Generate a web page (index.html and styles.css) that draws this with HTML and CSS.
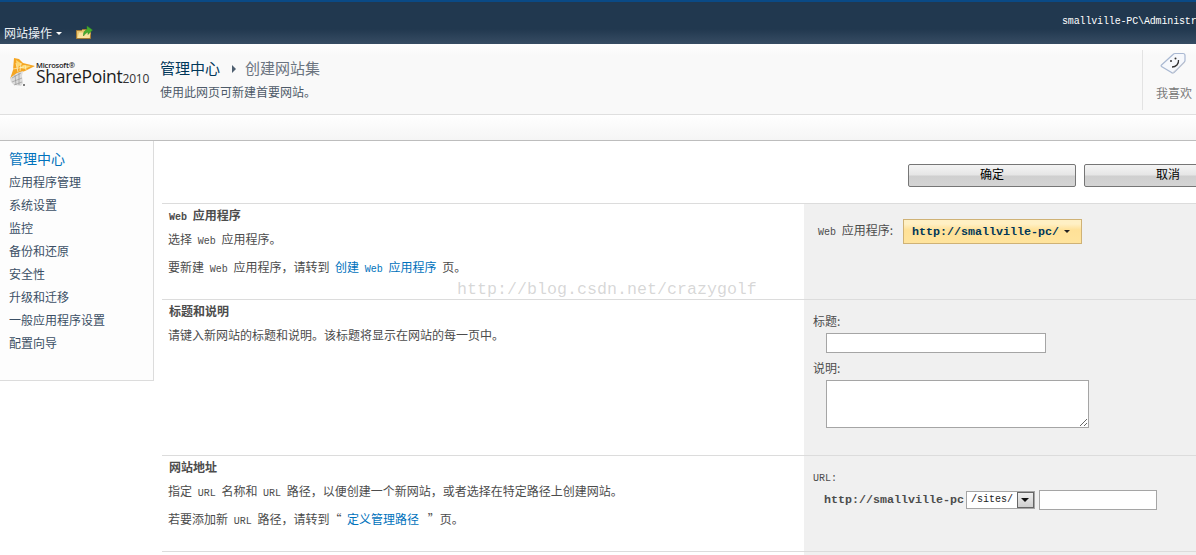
FILE: index.html
```html
<!DOCTYPE html>
<html lang="zh">
<head>
<meta charset="utf-8">
<title>创建网站集</title>
<link rel="stylesheet" href="styles.css">
</head>
<body>
<div class="page">
  <header class="topbar">
    <div class="site-actions">
      <span class="actions-label">网站操作</span>
      <span class="caret caret-white"></span>
      <svg class="folder" width="17" height="15" viewBox="0 0 17 15">
        <path d="M.5 5.500h5l1-1h8v9H.5z" fill="#e9c46e" stroke="#a67c34"/>
        <path d="M1.500 13l1.500-5.500h11.500L13.500 13z" fill="#f8e3a0"/>
        <path d="M7.500 11c-.5-3.500 1-5.500 3.500-6.500V1L16.500 5 12 9.500V7c-1.500.5-3 2-4.500 4z" fill="#46ad30" stroke="#2e8420" stroke-width=".5"/>
      </svg>
    </div>
    <div class="user">smallville-PC\Administrator</div>
  </header>

  <section class="titlearea">
    <div class="logo">
      <svg class="logo-mark" width="27" height="30" viewBox="0 0 27 30">
        <path d="M5 1l5 1 4 4 12 3-10 5-9 3-6 5 3-9z" fill="#f5a623"/>
        <path d="M7 3l6 4-5 4zM14 8l8 1-6 3-5-1z" fill="#fcd975"/>
        <path d="M7 6l2 9M12 6l-1 8M4 12l11-2M16 8l1 5" stroke="#fff3c8" stroke-width=".7" fill="none"/>
        <path d="M1 21l7-5 6-2-1 5 1 7-2 3-7-1-3-3z" fill="#dcdcdc"/>
        <path d="M3 21l9-5M3 25l10-4M5 28l8-3M6 18l1 10M10 16l0 12" stroke="#8f8f8f" stroke-width=".6" fill="none"/>
        <circle cx="15" cy="28" r="1" fill="#555"/>
      </svg>
      <div class="logo-text">
        <span class="logo-ms">Microsoft®</span>
        <span class="logo-name">SharePoint<small class="logo-year">2010</small></span>
      </div>
    </div>
    <div class="title-text">
      <div class="crumbs">
        <a class="crumb-root">管理中心</a>
        <span class="crumb-arrow"></span>
        <span class="crumb-cur">创建网站集</span>
      </div>
      <div class="subtitle">使用此网页可新建首要网站。</div>
    </div>
    <div class="like">
      <svg class="like-icon" width="27" height="22" viewBox="0 0 27 22">
        <path d="M1.500 13L13 2.500q1-1 2-1h8q2 0 2 2v5q0 1-1 2L14 20.500q-1.500 1-2.500 0L1.500 14.500q-.8-.8 0-1.500z" fill="#f6f8fc" stroke="#a9b8d2" stroke-width="1.200"/>
        <path d="M12 21.500l13-11.500" fill="none" stroke="#c9ccd2" stroke-width="1"/>
        <circle cx="11" cy="9" r="1" fill="#333"/>
        <circle cx="15.500" cy="6.500" r="1" fill="#333"/>
        <path d="M12 15c4 0 7-3 6.500-7" fill="none" stroke="#333" stroke-width="1.300"/>
      </svg>
      <span class="like-label">我喜欢</span>
    </div>
  </section>

  <div class="strip"></div>

  <div class="body">
    <nav class="side">
      <a class="side-head">管理中心</a>
      <a class="side-item">应用程序管理</a>
      <a class="side-item">系统设置</a>
      <a class="side-item">监控</a>
      <a class="side-item">备份和还原</a>
      <a class="side-item">安全性</a>
      <a class="side-item">升级和迁移</a>
      <a class="side-item">一般应用程序设置</a>
      <a class="side-item">配置向导</a>
    </nav>

    <main class="main">
      <div class="buttons">
        <button class="btn">确定</button>
        <button class="btn">取消</button>
      </div>

      <section class="row row-app">
        <div class="row-l">
          <h3 class="row-title"><span class="lat">Web</span> 应用程序</h3>
          <p class="row-p">选择 <span class="lat">Web</span> 应用程序。</p>
          <p class="row-p row-p2">要新建 <span class="lat">Web</span> 应用程序，请转到 <a class="link">创建 <span class="lat">Web</span> 应用程序</a> 页。</p>
        </div>
        <div class="row-r app-r">
          <span class="field-label"><span class="lat">Web</span> 应用程序:</span>
          <span class="app-select"><b class="app-url">http://smallville-pc/</b><span class="caret caret-dark"></span></span>
        </div>
      </section>

      <section class="row row-title-desc">
        <div class="row-l">
          <h3 class="row-title">标题和说明</h3>
          <p class="row-p">请键入新网站的标题和说明。该标题将显示在网站的每一页中。</p>
        </div>
        <div class="row-r desc-r">
          <label class="field-label">标题:</label>
          <input class="input input-title" type="text">
          <label class="field-label label-desc">说明:</label>
          <textarea class="input input-desc"></textarea>
        </div>
      </section>

      <section class="row row-url">
        <div class="row-l">
          <h3 class="row-title">网站地址</h3>
          <p class="row-p">指定 <span class="lat">URL</span> 名称和 <span class="lat">URL</span> 路径，以便创建一个新网站，或者选择在特定路径上创建网站。</p>
          <p class="row-p row-p3">若要添加新 <span class="lat">URL</span> 路径，请转到“ <a class="link link-sp">定义管理路径</a> ”页。</p>
        </div>
        <div class="row-r url-r">
          <label class="field-label"><span class="lat">URL:</span></label>
          <div class="url-line">
            <b class="url-base">http://smallville-pc</b>
            <span class="fake-select"><span class="fake-val">/sites/</span><span class="fake-btn"><span class="caret caret-black"></span></span></span>
            <input class="input input-url" type="text">
          </div>
        </div>
      </section>
      <div class="row-end"></div>
    </main>
  </div>

  <div class="watermark">http://blog.csdn.net/crazygolf</div>
</div>
</body>
</html>
```
FILE: styles.css
```css
* { box-sizing: border-box; }
html, body { margin: 0; padding: 0; height: 555px; overflow: hidden; background: #fff; }
body { font: 12px/16px "Noto Sans CJK SC", "Liberation Mono", sans-serif; color: #4c4c4c; }
.page { position: relative; width: 1196px; height: 555px; overflow: hidden; }
.lat { font-family: "Liberation Mono", monospace; font-size: 10px; }

.topbar { height: 44px; display: flex; justify-content: space-between; background: linear-gradient(#21384f 0, #21384f 27px, #3a4f66 44px); border-top: 2px solid #0a4a86; color: #fff; }
.site-actions { display: flex; align-items: center; padding: 20px 0 0 4px; }
.actions-label { font-size: 12px; line-height: 18px; color: #eef2f6; }
.caret { display: inline-block; width: 0; height: 0; border-left: 3px solid transparent; border-right: 3px solid transparent; border-top: 3px solid #fff; }
.caret-white { margin-left: 4px; }
.folder { margin-left: 14px; margin-top: -2px; }
.user { width: 134px; padding: 13px 0 0; white-space: nowrap; overflow: hidden; font: 10px/14px "Liberation Mono", monospace; letter-spacing: -.15px; }

.titlearea { height: 71px; display: flex; background: linear-gradient(#fff 0, #f9f9f9 12px); border-bottom: 1px solid #dfdfdf; }
.logo { width: 160px; display: flex; align-items: flex-start; padding: 13px 0 0 9px; }
.logo-mark { flex: none; }
.logo-text { display: flex; flex-direction: column; margin-left: 0; font-family: "Open Sans", sans-serif; color: #1c1c1c; }
.logo-ms { font-size: 7.500px; line-height: 6px; font-weight: 600; margin-top: 5px; letter-spacing: -.2px; }
.logo-name { font-size: 17.500px; line-height: 17px; white-space: nowrap; letter-spacing: -.3px; }
.logo-year { font-size: 12px; letter-spacing: -.2px; color: #333; }
.title-text { flex: 1; padding-top: 14px; }
.crumbs { display: flex; align-items: center; font-size: 15px; line-height: 20px; }
.crumb-root { color: #003759; }
.crumb-arrow { width: 0; height: 0; margin: 2px 9px 0 12px; border-top: 4px solid transparent; border-bottom: 4px solid transparent; border-left: 4px solid #4f5f70; }
.crumb-cur { color: #6b7480; }
.subtitle { margin-top: 6px; color: #4d5a68; line-height: 16px; }
.like { width: 54px; height: 60px; margin-top: 6px; border-left: 1px solid #e3e3e3; display: flex; flex-direction: column; align-items: flex-start; color: #7a7a7a; padding-left: 13px; }
.like-icon { margin: 2px 0 0 4px; }
.like-label { margin-top: 11px; line-height: 16px; }

.strip { height: 26px; background: linear-gradient(#fff, #f5f5f5); border-bottom: 1px solid #bdbdbd; }

.body { display: flex; align-items: flex-start; }
.side { width: 154px; height: 240px; flex: none; padding: 9px 0 0 9px; background: #fdfdfd; border-right: 1px solid #dcdcdc; border-bottom: 1px solid #dcdcdc; display: flex; flex-direction: column; }
.side-head { height: 20px; font-size: 14px; line-height: 16px; color: #0072bc; }
.side-item { height: 23px; line-height: 23px; color: #3b4f65; }

.main { flex: 1; min-width: 0; padding-left: 8px; }
.buttons { height: 62px; display: flex; gap: 8px; padding: 23px 0 0 746px; }
.btn { flex: none; width: 168px; height: 23px; padding: 0 0 4px; border: 1px solid #767676; border-radius: 2px; background: linear-gradient(#f4f4f4 0, #e6e6e6 48%, #cfcfcf 52%, #d4d4d4 100%); font: 12px/16px "Noto Sans CJK SC", sans-serif; color: #000; }

.row { display: flex; width: 1034px; border-top: 1px solid #dcdcdc; }
.row-app { height: 96px; }
.row-title-desc { height: 156px; }
.row-url { height: 96px; }
.row-end { width: 1034px; height: 4px; border-top: 1px solid #dcdcdc; background: linear-gradient(to right, #fff 642px, #f0f0f0 642px); }
.row-l { width: 642px; flex: none; padding: 2px 0 0 6px; word-spacing: 3px; }
.row-r { flex: 1; background: #f0f0f0; word-spacing: 3px; }
.row-title { margin: 0 0 0 1px; font-size: 12px; line-height: 17px; font-weight: 700; color: #4c4c4c; }
.row-p { margin: 5px 0 0; line-height: 16px; color: #4c4c4c; }
.row-p2 { margin-top: 12px; }
.link { color: #0072bc; }
.link-sp { margin: 0 3px 0 0; }
.row-url .row-p, .row-title-desc .row-p { margin-top: 8px; }
.row-url .row-p3 { margin-top: 12px; }
.row-app .row-p2 { margin-top: 12px; }
.row-url .row-p3, .row-app .row-p2 { margin-top: 9px; }
.field-label { color: #4c4c4c; display: block; line-height: 16px; }

.app-r { display: flex; align-items: flex-start; padding: 15px 0 0 14px; }
.app-r .field-label { margin-top: 3px; white-space: nowrap; }
.app-select { display: flex; align-items: center; width: 179px; height: 25px; margin-left: 10px; padding-left: 8px; background: linear-gradient(#fff0c4 0, #fff0c4 4px, #ffe197 10px, #ffe49e 100%); border: 1px solid #cfb276; }
.app-url { font: 700 11.670px/14px "Liberation Mono", monospace; color: #003759; white-space: nowrap; }
.caret-dark { margin-left: 5px; border-top-color: #222; }

.desc-r { padding: 13px 0 0 9px; }
.input { display: block; background: #fff; border: 1px solid #a5a5a5; border-radius: 0; outline: 0; margin: 0; padding: 0; }
.input-title { width: 220px; height: 20px; margin: 4px 0 0 13px; }
.label-desc { margin-top: 7px; }
.input-desc { width: 263px; height: 48px; margin: 4px 0 0 13px; }

.url-r { padding: 12px 0 0 9px; }
.url-line { display: flex; align-items: center; margin-top: 3px; padding-left: 11px; }
.url-base { font: 700 11.670px/14px "Liberation Mono", monospace; color: #4c4c4c; white-space: nowrap; }
.fake-select { display: flex; width: 69px; height: 18px; margin-left: 2px; background: #fff; border: 1px solid #a5a5a5; }
.fake-val { flex: 1; font: 10px/16px "Liberation Mono", monospace; color: #222; padding-left: 4px; }
.fake-btn { width: 17px; display: flex; align-items: center; justify-content: center; background: linear-gradient(#eee, #cfcfcf); border: 1px solid #666; }
.caret-black { border-left-width: 4px; border-right-width: 4px; border-top: 4px solid #111; }
.input-url { width: 118px; height: 20px; margin-left: 4px; }

.watermark { position: absolute; left: 457px; top: 279px; font: 16.670px/22px "Liberation Mono", monospace; color: rgba(150,150,150,.38); white-space: nowrap; pointer-events: none; }
```
